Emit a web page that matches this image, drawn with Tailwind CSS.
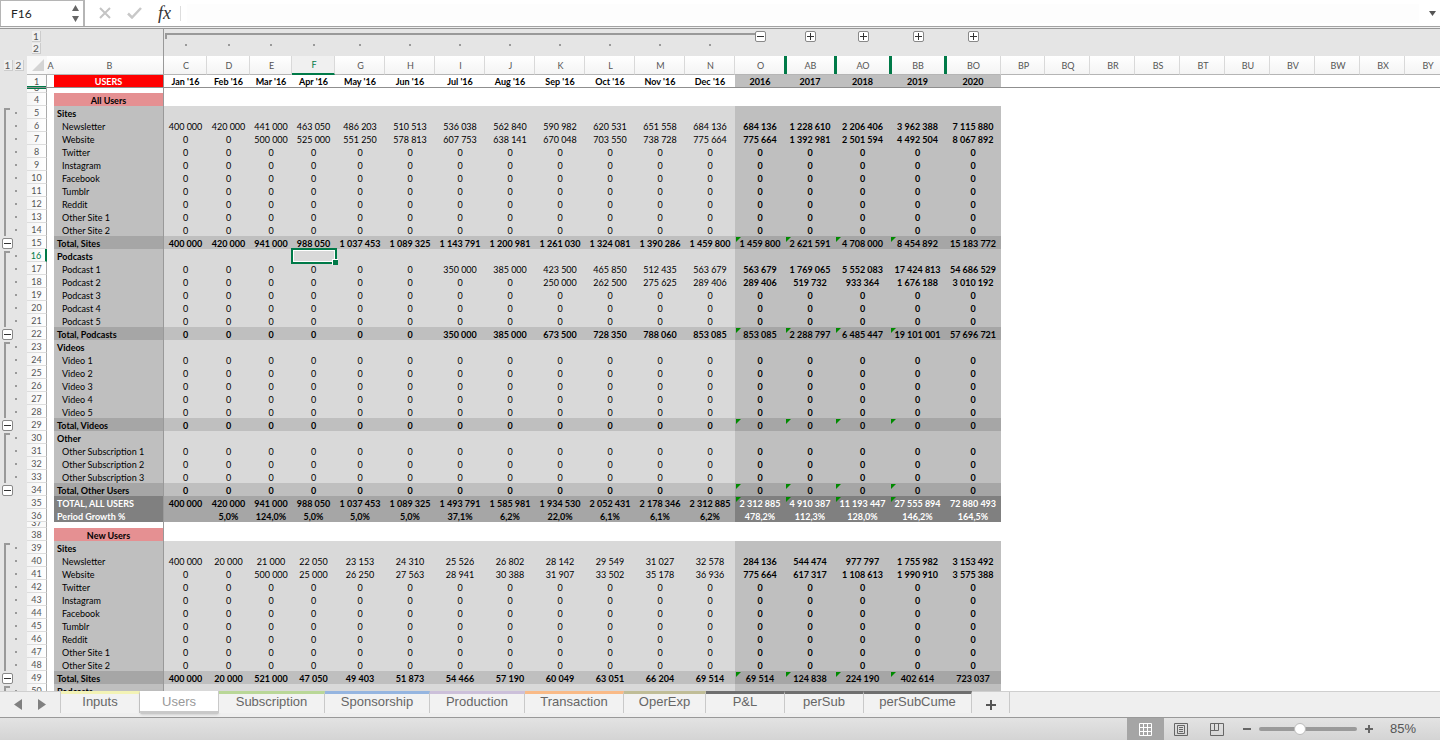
<!DOCTYPE html>
<html lang="en">
<head>
    <meta charset="UTF-8">
    <meta name="viewport" content="width=device-width, initial-scale=1.0">
    <title>Users</title>
    <script src="https://cdn.jsdelivr.net/npm/@tailwindcss/browser@4"></script>
</head>
<body class="flex h-screen flex-col overflow-hidden bg-white font-[Lato,'Open_Sans',sans-serif] text-black">

    <!-- Formula bar -->
    <header class="flex h-[29px] shrink-0 flex-col">
        <div class="flex h-[26px] items-center">
            <div class="flex h-full w-[85px] items-center justify-between border-t border-r-2 border-l border-[#b5b5b5] pr-1 pl-2.5">
                <input id="cellName" aria-label="Cell name" value="F16" class="w-12 bg-transparent text-[12px] leading-4 text-[#222] outline-none">
                <button aria-label="Previous names" class="flex flex-col gap-1.5">
                    <svg class="h-[17px] w-[7px]" viewBox="0 0 7 17" fill="#666"><path d="M3.500 0L7 6H0zM0 11h7l-3.500 6z"/></svg>
                </button>
            </div>
            <button aria-label="Cancel" class="ml-[14px]">
                <svg class="h-3 w-3" viewBox="0 0 12 12" fill="none" stroke="#c4c4c4" stroke-width="2"><path d="M1 1l10 10M11 1L1 11"/></svg>
            </button>
            <button aria-label="Enter" class="ml-4">
                <svg class="h-3 w-[15px]" viewBox="0 0 15 12" fill="none" stroke="#c8c8c8" stroke-width="2.500"><path d="M1 6.500l4 4L14 1"/></svg>
            </button>
            <button aria-label="Insert function" class="ml-4 w-[18px] text-left font-['Liberation_Serif',serif] text-[18px] leading-5 text-[#333] italic">fx</button>
            <div class="ml-1 h-[15px] w-px bg-[#ddd]"></div>
            <input aria-label="Formula" class="ml-1.5 h-[19px] min-w-0 flex-1 bg-[#fdfdfd] outline-none">
            <button aria-label="Expand formula bar" class="mr-1 ml-2.5">
                <svg class="h-[5px] w-[7px]" viewBox="0 0 7 5" fill="#555"><path d="M0 0h7L3.500 5z"/></svg>
            </button>
        </div>
        <div class="h-[3px] border-t border-b border-t-[#a3a3a3] border-b-[#979797] bg-[#f0f0f0]"></div>
    </header>

    <!-- Sheet -->
    <main class="min-h-0 flex-1 overflow-hidden">
        <table class="w-[1450px] table-fixed border-separate border-spacing-0 text-center text-[9px] leading-[10px]">
            <colgroup id="cols"></colgroup>
            <thead id="head"></thead>
            <tbody id="body"></tbody>
        </table>
    </main>

    <!-- Sheet tabs -->
    <nav class="flex h-[27px] shrink-0 border-t border-b border-t-[#cfcfcf] border-b-[#999] bg-[#efefef] font-['Liberation_Sans',sans-serif] text-[13px] leading-4 text-[#666]">
        <div class="flex h-[21px] w-[61px] items-center gap-4 border-r border-[#c9c9c9] pt-1 pl-[14px]">
            <button aria-label="Scroll tabs left"><svg class="h-[11px] w-2" viewBox="0 0 8 11" fill="#808080"><path d="M8 0v11L0 5.500z"/></svg></button>
            <button aria-label="Scroll tabs right"><svg class="h-[11px] w-2" viewBox="0 0 8 11" fill="#808080"><path d="M0 0v11l8-5.500z"/></svg></button>
        </div>
        <div id="tabs" class="flex"></div>
        <button aria-label="Add sheet" class="flex h-[21px] w-[38px] items-center justify-center border-r border-[#c9c9c9] pt-1">
            <svg class="h-[10px] w-[10px]" viewBox="0 0 10 10" stroke="#555" stroke-width="2"><path d="M5 0v10M0 5h10"/></svg>
        </button>
    </nav>

    <!-- Status bar -->
    <footer class="flex h-[22px] shrink-0 items-center justify-end bg-linear-to-b from-[#e3e3e3] to-[#d4d4d4] font-['Liberation_Sans',sans-serif] text-[13px] leading-4 text-[#555]">
        <button aria-label="Normal view" class="flex h-full w-[37px] items-center justify-center bg-[#a5a5a5]">
            <svg class="h-[13px] w-[13px]" viewBox="0 0 13 13" fill="none" stroke="#fff"><path d="M.5 .5h12v12H.5zM4.500 0v13M8.500 0v13M0 4.500h13M0 8.500h13"/></svg>
        </button>
        <button aria-label="Page layout" class="ml-2.5">
            <svg class="h-[13px] w-[14px]" viewBox="0 0 14 13" fill="none" stroke="#666"><path d="M.5 .5h13v12H.5zM3.500 2.500h7v8h-7zM5 4.500h4M5 6.500h4M5 8.500h4"/></svg>
        </button>
        <button aria-label="Page break preview" class="ml-[22px]">
            <svg class="h-[13px] w-[14px]" viewBox="0 0 14 13" fill="none" stroke="#666"><path d="M.5 .5h13v12H.5zM.5 7.500h8v-7M4.500 .5v7"/></svg>
        </button>
        <button aria-label="Zoom out" class="ml-[19px] h-0.5 w-2 bg-[#666]"></button>
        <input type="range" aria-label="Zoom" min="10" max="158" value="71" class="ml-2 h-1 w-[98px] appearance-none rounded-full bg-[#9a9a9a] [&::-webkit-slider-thumb]:size-3 [&::-webkit-slider-thumb]:appearance-none [&::-webkit-slider-thumb]:rounded-full [&::-webkit-slider-thumb]:border [&::-webkit-slider-thumb]:border-[#bbb] [&::-webkit-slider-thumb]:bg-white">
        <button aria-label="Zoom in" class="ml-2">
            <svg class="h-2 w-2" viewBox="0 0 8 8" stroke="#666" stroke-width="2"><path d="M4 0v8M0 4h8"/></svg>
        </button>
        <output class="mr-6 ml-[17px]">85%</output>
    </footer>

    <script>
        const widths = [27, 20, 7, 110, 43, 43, 42, 43, 50, 50, 50, 50, 50, 50, 50, 50, 50, 50, 55, 55, 56, 44, 45, 45, 45, 45, 45, 45, 45, 45, 45];
        const letters = 'A B C D E F G H I J K L M N O AB AO BB BO BP BQ BR BS BT BU BV BW BX BY'.split(' ');
        const periods = ["Jan '16", "Feb '16", "Mar '16", "Apr '16", "May '16", "Jun '16", "Jul '16", "Aug '16", "Sep '16", "Oct '16", "Nov '16", "Dec '16", '2016', '2017', '2018', '2019', '2020'];

        // kind: t = section title, h = group heading, d = data, s = subtotal, g = grand total, x = spacer
        // Data rows without values are all zero.
        const rows = [
            [3, 'x'],
            [4, 't', 'All Users'],
            [5, 'h', 'Sites'],
            [6, 'd', 'Newsletter', '400 000|420 000|441 000|463 050|486 203|510 513|536 038|562 840|590 982|620 531|651 558|684 136|684 136|1 228 610|2 206 406|3 962 388|7 115 880'],
            [7, 'd', 'Website', '0|0|500 000|525 000|551 250|578 813|607 753|638 141|670 048|703 550|738 728|775 664|775 664|1 392 981|2 501 594|4 492 504|8 067 892'],
            [8, 'd', 'Twitter'],
            [9, 'd', 'Instagram'],
            [10, 'd', 'Facebook'],
            [11, 'd', 'Tumblr'],
            [12, 'd', 'Reddit'],
            [13, 'd', 'Other Site 1'],
            [14, 'd', 'Other Site 2'],
            [15, 's', 'Total, Sites', '400 000|420 000|941 000|988 050|1 037 453|1 089 325|1 143 791|1 200 981|1 261 030|1 324 081|1 390 286|1 459 800|1 459 800|2 621 591|4 708 000|8 454 892|15 183 772'],
            [16, 'h', 'Podcasts'],
            [17, 'd', 'Podcast 1', '0|0|0|0|0|0|350 000|385 000|423 500|465 850|512 435|563 679|563 679|1 769 065|5 552 083|17 424 813|54 686 529'],
            [18, 'd', 'Podcast 2', '0|0|0|0|0|0|0|0|250 000|262 500|275 625|289 406|289 406|519 732|933 364|1 676 188|3 010 192'],
            [19, 'd', 'Podcast 3'],
            [20, 'd', 'Podcast 4'],
            [21, 'd', 'Podcast 5'],
            [22, 's', 'Total, Podcasts', '0|0|0|0|0|0|350 000|385 000|673 500|728 350|788 060|853 085|853 085|2 288 797|6 485 447|19 101 001|57 696 721'],
            [23, 'h', 'Videos'],
            [24, 'd', 'Video 1'],
            [25, 'd', 'Video 2'],
            [26, 'd', 'Video 3'],
            [27, 'd', 'Video 4'],
            [28, 'd', 'Video 5'],
            [29, 's', 'Total, Videos'],
            [30, 'h', 'Other'],
            [31, 'd', 'Other Subscription 1'],
            [32, 'd', 'Other Subscription 2'],
            [33, 'd', 'Other Subscription 3'],
            [34, 's', 'Total, Other Users'],
            [35, 'g', 'TOTAL, ALL USERS', '400 000|420 000|941 000|988 050|1 037 453|1 089 325|1 493 791|1 585 981|1 934 530|2 052 431|2 178 346|2 312 885|2 312 885|4 910 387|11 193 447|27 555 894|72 880 493'],
            [36, 'g', 'Period Growth %', '|5,0%|124,0%|5,0%|5,0%|5,0%|37,1%|6,2%|22,0%|6,1%|6,1%|6,2%|478,2%|112,3%|128,0%|146,2%|164,5%'],
            [37, 'x'],
            [38, 't', 'New Users'],
            [39, 'h', 'Sites'],
            [40, 'd', 'Newsletter', '400 000|20 000|21 000|22 050|23 153|24 310|25 526|26 802|28 142|29 549|31 027|32 578|284 136|544 474|977 797|1 755 982|3 153 492'],
            [41, 'd', 'Website', '0|0|500 000|25 000|26 250|27 563|28 941|30 388|31 907|33 502|35 178|36 936|775 664|617 317|1 108 613|1 990 910|3 575 388'],
            [42, 'd', 'Twitter'],
            [43, 'd', 'Instagram'],
            [44, 'd', 'Facebook'],
            [45, 'd', 'Tumblr'],
            [46, 'd', 'Reddit'],
            [47, 'd', 'Other Site 1'],
            [48, 'd', 'Other Site 2'],
            [49, 's', 'Total, Sites', '400 000|20 000|521 000|47 050|49 403|51 873|54 466|57 190|60 049|63 051|66 204|69 514|69 514|124 838|224 190|402 614|723 037'],
            [50, 'h', 'Podcasts']
        ];

        const styles = {
            t: { label: 'bg-[#e59092] font-bold', month: '', year: '' },
            h: { label: 'bg-[#bfbfbf] font-bold text-left pl-[3px]', month: 'bg-[#d9d9d9]', year: 'bg-[#bfbfbf]' },
            d: { label: 'bg-[#bfbfbf] font-normal text-left pl-2', month: 'bg-[#d9d9d9]', year: 'bg-[#bfbfbf] font-bold' },
            s: { label: 'bg-[#a6a6a6] font-bold text-left pl-[3px]', month: 'bg-[#bfbfbf] font-bold', year: 'bg-[#a6a6a6] font-bold' },
            g: { label: 'bg-[#808080] text-white font-bold text-left pl-[3px]', month: 'bg-[#a6a6a6] font-bold', year: 'bg-[#808080] text-white font-bold' }
        };

        const toggle = (sign) => `<button aria-label="Toggle group" class="flex size-[11px] items-center justify-center rounded-xs border border-[#888] bg-white"><svg class="size-[7px]" viewBox="0 0 7 7" stroke="#333"><path d="${sign === '+' ? 'M3.500 0v7M0 3.500h7' : 'M0 3.500h7'}"/></svg></button>`;
        const level = (n) => `<button class="h-[11px] w-[9px] border-r border-b border-[#ccc] bg-[#efefef] text-[10px] leading-[10px] text-[#555]">${n}</button>`;
        const flag = '<svg class="absolute top-px left-px size-[5px]" viewBox="0 0 5 5" fill="#008a00"><path d="M0 0h5L0 5z"/></svg>';
        const selection = '<div class="absolute -top-px -right-0.5 -bottom-0.5 -left-px z-10 border-2 border-[#007a48] outline -outline-offset-3 outline-white"></div><div class="absolute -right-[3px] -bottom-[3px] z-20 size-[6px] border-t border-l border-white bg-[#007a48]"></div>';

        document.getElementById('cols').innerHTML = widths.map(w => `<col style="width:${w}px">`).join('');

        // Outline levels, column letters and the frozen first row
        let head = '<tr class="h-[14px] bg-[#e5e5e5]"><td></td><td class="pt-[2px] pl-[5px] align-top"><div class="flex">' + level(1) + '</div></td><td></td><td class="border-r border-[#999]"></td>';
        for (let i = 0; i < 12; i++) {
            head += i === 0
                ? '<td class="pt-[4px] pl-px align-top"><div class="h-[6px] border-t-2 border-l-2 border-[#999]"></div></td>'
                : '<td class="pt-[4px] align-top"><div class="h-[6px] border-t-2 border-[#999]"></div></td>';
        }
        head += '<td class="pt-[2px] align-top"><div class="flex"><div class="mt-[2px] h-0.5 w-5 bg-[#999]"></div>' + toggle('-') + '</div></td>';
        for (let i = 0; i < 4; i++) head += '<td class="pt-[2px] pl-px align-top"><div class="flex justify-center">' + toggle('+') + '</div></td>';
        head += '<td colspan="10"></td></tr>';

        head += '<tr class="h-[13px] bg-[#e5e5e5]"><td></td><td class="pl-[5px] align-top"><div class="flex">' + level(2) + '</div></td><td></td><td class="border-r border-[#999]"></td>';
        for (let i = 0; i < 12; i++) head += '<td class="pt-px align-top"><div class="mx-auto size-0.5 bg-[#999]"></div></td>';
        head += '<td colspan="15"></td></tr>';

        head += '<tr class="h-[19px] text-[#555]"><td class="bg-[#e5e5e5]"><div class="flex justify-center gap-0.5">' + level(1) + level(2) + '</div></td>';
        head += '<td class="border-b border-[#b5b5b5] bg-[#f8f8f8]"><svg class="ml-[5px] size-3" viewBox="0 0 12 12" fill="#d4d4d4"><path d="M12 0v12H0z"/></svg></td>';
        letters.forEach((l) => {
            let look = 'border-r border-b border-r-[#d9d9d9] border-b-[#b5b5b5] bg-linear-to-b from-white to-[#f4f4f4] pl-0.5';
            if (l === 'A') look = 'border-b border-b-[#b5b5b5] bg-linear-to-b from-white to-[#f4f4f4]';
            if (l === 'B') look = 'border-r border-b border-r-[#999] border-b-[#b5b5b5] bg-linear-to-b from-white to-[#f4f4f4] pl-0.5';
            if (l === 'F') look = 'border-r border-b-2 border-r-[#d9d9d9] border-b-[#007a48] bg-[#f0f0f0] pl-0.5 text-[#007a48]';
            const hidden = ['AB', 'AO', 'BB', 'BO'].includes(l) ? '<span class="absolute inset-y-0 -left-px w-[3px] bg-[#007a48]"></span>' : '';
            head += `<th class="relative pt-px font-normal ${look}">${l}${hidden}</th>`;
        });
        head += '</tr>';

        head += '<tr class="h-[13px]"><td class="bg-[#e5e5e5]"></td><th class="border-r border-b border-r-[#ababab] border-b-[#8f8f8f] bg-[#fafafa] pt-px font-normal text-[#555] shadow-[inset_0_-1px_#007a48]">1</th><td class="border-b border-[#8f8f8f]"></td><th class="border-r border-b border-[#8f8f8f] bg-[#ff0000] pt-[2px] text-white">USERS</th>';
        periods.forEach((p, i) => {
            head += `<th class="border-b border-[#8f8f8f] pt-[2px] ${i > 11 ? 'bg-[#bfbfbf]' : ''}">${p}</th>`;
        });
        head += '<td colspan="10" class="border-b border-[#8f8f8f]"></td></tr>';
        document.getElementById('head').innerHTML = head;

        document.getElementById('body').innerHTML = rows.map(([n, kind, label, values]) => {
            if (kind === 'x') {
                return `<tr><td class="bg-[#e5e5e5]"></td><td class="border-r border-b border-r-[#ababab] border-b-[#ddd] bg-[#fafafa] leading-[8px] text-[#555]"><div class="flex items-end justify-center overflow-hidden ${n === 3 ? 'h-[4px] border-t border-[#007a48]' : 'h-[5px]'}"><span>${n}</span></div></td><td></td><td class="border-r border-[#999]"></td><td colspan="27"></td></tr>`;
            }
            const s = styles[kind];
            let gutter = '';
            if (kind === 'h') gutter = '<div class="flex h-[13px]"><div class="mt-[2px] ml-1 w-[6px] border-t-2 border-l-2 border-[#999]"></div><div class="mt-[6px] ml-[5px] size-0.5 bg-[#999]"></div></div>';
            if (kind === 'd') gutter = '<div class="flex h-[13px]"><div class="ml-1 w-[6px] border-l-2 border-[#999]"></div><div class="mt-[6px] ml-[5px] size-0.5 bg-[#999]"></div></div>';
            if (kind === 's') gutter = '<div class="flex h-[13px] pt-[2px] pl-[2px]">' + toggle('-') + '</div>';

            const active = n === 16 ? 'border-r-2 border-r-[#007a48] text-[#007a48]' : 'border-r border-r-[#ababab] text-[#555]';
            let html = `<tr class="h-[13px]"><td class="bg-[#e5e5e5]">${gutter}</td><th class="border-b border-b-[#ddd] bg-linear-to-r from-[#f4f4f4] to-white pt-[2px] font-normal ${active}">${n}</th><td></td><th class="border-r border-[#999] pt-[3px] whitespace-nowrap ${s.label}">${label}</th>`;

            let cells = Array(17).fill('');
            if (values) cells = values.split('|');
            else if (kind === 'd' || kind === 's') cells = Array(17).fill('0');
            cells.forEach((v, i) => {
                const mark = (kind === 's' || n === 35) && i > 11 && i < 16 ? flag : '';
                const box = n === 16 && i === 3 ? selection : '';
                html += `<td class="relative pt-[3px] whitespace-nowrap ${i > 11 ? s.year : s.month}">${v}${mark}${box}</td>`;
            });
            return html + '<td colspan="10"></td></tr>';
        }).join('');

        const tabs = [
            ['Inputs', 'w-[79px] border-t-[#f3f3b5]'],
            ['Users', ''],
            ['Subscription', 'w-[106px] border-t-[#b9d797]'],
            ['Sponsorship', 'w-[105px] border-t-[#95b5e0]'],
            ['Production', 'w-[95px] border-t-[#ccc0da]'],
            ['Transaction', 'w-[99px] border-t-[#f9ba87]'],
            ['OperExp', 'w-[82px] border-t-[#c0bd97]'],
            ['P&amp;L', 'w-[79px] border-t-[#6f6f6f]'],
            ['perSub', 'w-[79px] border-t-[#6f6f6f]'],
            ['perSubCume', 'w-[108px] border-t-[#6f6f6f]']
        ];
        document.getElementById('tabs').innerHTML = tabs.map(([name, look]) => name === 'Users'
            ? '<button class="-mt-px h-[23px] w-[79px] rounded-b-xs border-r border-b-3 border-[#c9c9c9] bg-white pt-px text-[#999] shadow-sm">Users</button>'
            : `<button class="-mt-px h-[22px] border-t-3 border-r border-r-[#c9c9c9] bg-[#f2f2f2] pb-[3px] ${look}">${name}</button>`
        ).join('');
    </script>
</body>
</html>
